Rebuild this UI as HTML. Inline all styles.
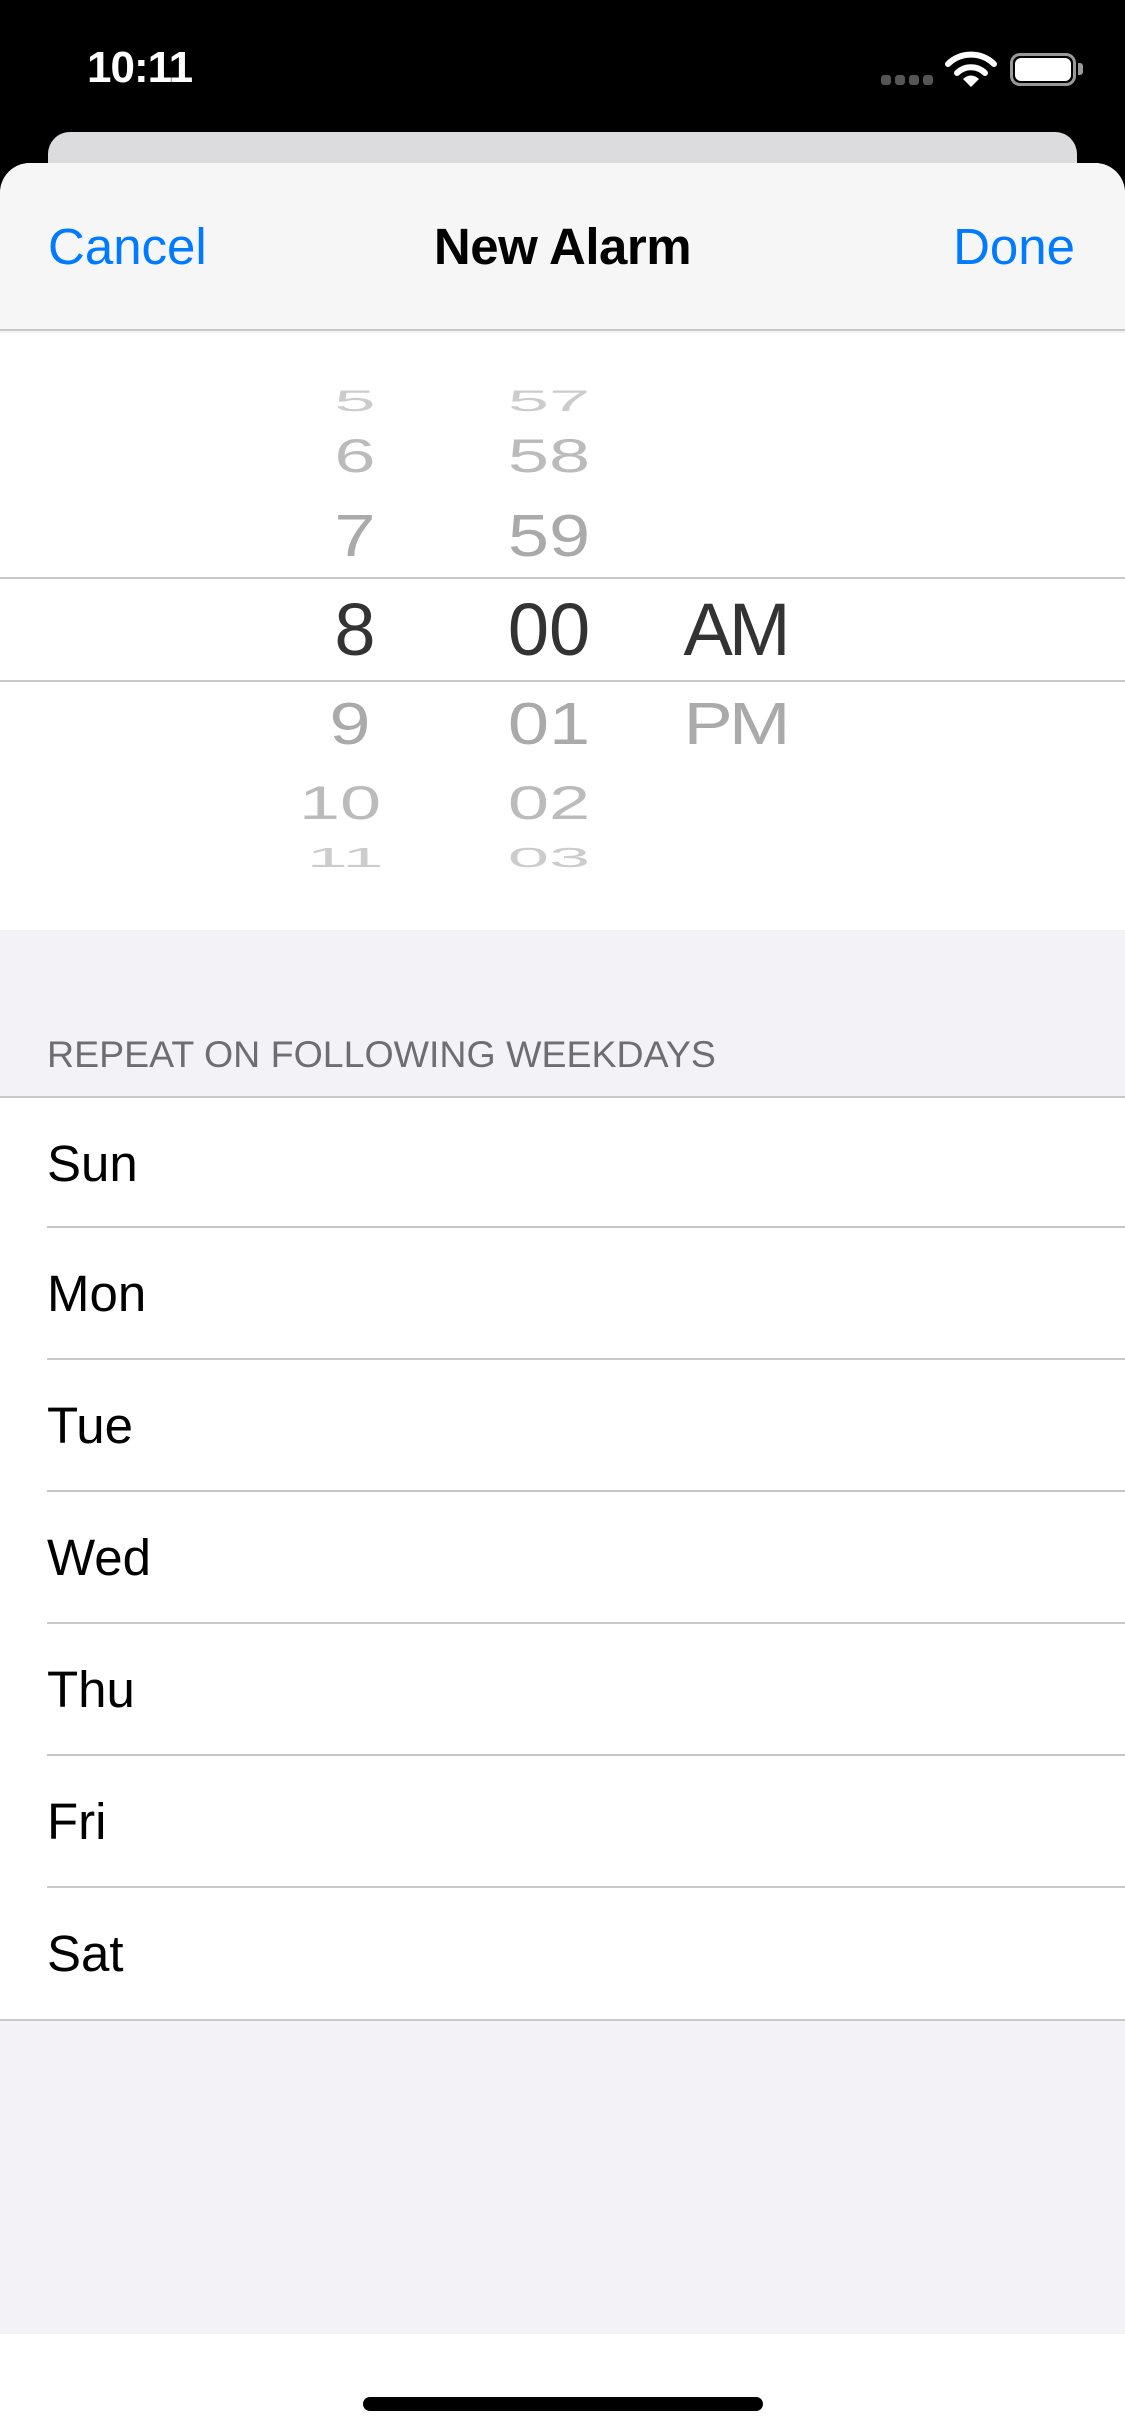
<!DOCTYPE html>
<html><head><meta charset="utf-8"><style>
*{margin:0;padding:0;box-sizing:border-box}
body{width:1125px;height:2436px;position:relative;background:#000;font-family:"Liberation Sans",sans-serif;overflow:hidden}
.a{position:absolute}
.num{position:absolute;width:200px;text-align:center;font-size:74px;line-height:74px;height:74px;}
.row{position:absolute;left:0;width:1125px;height:132px;background:#fff}
.row span{position:absolute;left:47px;top:40px;font-size:51px;line-height:51px;color:#000}
.sep{position:absolute;left:47px;right:0;height:2px;background:#c8c7cc}
</style></head><body>
<div class="a" style="left:87px;top:44px;font-size:44px;font-weight:bold;color:#fff;line-height:48px;letter-spacing:-1px">10:11</div>
<div class="a" style="left:881px;top:75px;width:10px;height:10px;border-radius:3px;background:#555"></div>
<div class="a" style="left:895px;top:75px;width:10px;height:10px;border-radius:3px;background:#555"></div>
<div class="a" style="left:909px;top:75px;width:10px;height:10px;border-radius:3px;background:#555"></div>
<div class="a" style="left:923px;top:75px;width:10px;height:10px;border-radius:3px;background:#555"></div>
<svg class="a" style="left:945px;top:50px" width="52" height="38" viewBox="0 0 52 38">
<path d="M3 14 A33 33 0 0 1 49 14" stroke="#fff" stroke-width="6" fill="none" stroke-linecap="round"/>
<path d="M12 23 A20 20 0 0 1 40 23" stroke="#fff" stroke-width="6" fill="none" stroke-linecap="round"/>
<path d="M26 37 L18 29 A11 11 0 0 1 34 29 Z" fill="#fff"/>
</svg>
<div class="a" style="left:1010px;top:53px;width:66px;height:33px;border:3px solid #999;border-radius:10px"></div>
<div class="a" style="left:1015px;top:58px;width:56px;height:23px;background:#fff;border-radius:6px"></div>
<div class="a" style="left:1078px;top:63px;width:5px;height:12px;background:#999;border-radius:0 3px 3px 0"></div>

<div class="a" style="left:48px;top:132px;width:1029px;height:80px;background:#dcdcde;border-radius:22px 22px 0 0"></div>
<div class="a" style="left:0;top:163px;width:1125px;height:2273px;background:#f2f2f7;border-radius:30px 30px 0 0;overflow:hidden">
  <div class="a" style="left:0;top:0;width:1125px;height:168px;background:#f6f6f7;border-bottom:2px solid #c8c8c8"></div>
  <div class="a" style="left:48px;top:57px;font-size:51px;line-height:54px;color:#007aff">Cancel</div>
  <div class="a" style="left:0;width:1125px;text-align:center;top:57px;font-size:51px;line-height:54px;font-weight:bold;color:#000;letter-spacing:-0.5px">New Alarm</div>
  <div class="a" style="right:50px;top:57px;font-size:51px;line-height:54px;color:#007aff">Done</div>
  <div class="a" style="left:0;top:170px;width:1125px;height:597px;background:#fff"></div>
</div>
<div class="a" style="left:0;top:577px;width:1125px;height:2px;background:#c8c8c8"></div>
<div class="a" style="left:0;top:680px;width:1125px;height:2px;background:#c8c8c8"></div>

<div class="num" style="left:255px;top:364px;color:#ccc;transform:scaleY(0.4)">5</div>
<div class="num" style="left:255px;top:419px;color:#bbb;transform:scaleY(0.64)">6</div>
<div class="num" style="left:255px;top:499px;color:#aaa;transform:scaleY(0.8)">7</div>
<div class="num" style="left:255px;top:593px;color:#333">8</div>
<div class="num" style="left:250px;top:687px;color:#aaa;transform:scaleY(0.8)">9</div>
<div class="num" style="left:240px;top:766px;color:#bbb;transform:scaleY(0.64)">10</div>
<div class="num" style="left:245px;top:821px;color:#ccc;transform:scaleY(0.37)">11</div>

<div class="num" style="left:449px;top:364px;color:#ccc;transform:scaleY(0.4)">57</div>
<div class="num" style="left:449px;top:419px;color:#bbb;transform:scaleY(0.64)">58</div>
<div class="num" style="left:449px;top:499px;color:#aaa;transform:scaleY(0.8)">59</div>
<div class="num" style="left:449px;top:593px;color:#333">00</div>
<div class="num" style="left:449px;top:687px;color:#aaa;transform:scaleY(0.8)">01</div>
<div class="num" style="left:449px;top:766px;color:#bbb;transform:scaleY(0.64)">02</div>
<div class="num" style="left:449px;top:821px;color:#ccc;transform:scaleY(0.37)">03</div>

<div class="num" style="left:635px;top:593px;color:#333;letter-spacing:-4px">AM</div>
<div class="num" style="left:635px;top:687px;color:#aaa;transform:scaleY(0.8);letter-spacing:-4px">PM</div>

<div class="a" style="left:47px;top:1035px;font-size:37.5px;line-height:39px;color:#6d6d72">REPEAT ON FOLLOWING WEEKDAYS</div>
<div class="a" style="left:0;top:1096px;width:1125px;height:2px;background:#c8c7cc"></div>
<div class="row" style="top:1098px"><span>Sun</span></div>
<div class="sep" style="top:1226px"></div>
<div class="row" style="top:1228px"><span>Mon</span></div>
<div class="sep" style="top:1358px"></div>
<div class="row" style="top:1360px"><span>Tue</span></div>
<div class="sep" style="top:1490px"></div>
<div class="row" style="top:1492px"><span>Wed</span></div>
<div class="sep" style="top:1622px"></div>
<div class="row" style="top:1624px"><span>Thu</span></div>
<div class="sep" style="top:1754px"></div>
<div class="row" style="top:1756px"><span>Fri</span></div>
<div class="sep" style="top:1886px"></div>
<div class="row" style="top:1888px;height:132px"><span>Sat</span></div>
<div class="a" style="left:0;top:2019px;width:1125px;height:2px;background:#c8c7cc"></div>
<div class="a" style="left:0;top:2334px;width:1125px;height:102px;background:#fff"></div>
<div class="a" style="left:363px;top:2397px;width:400px;height:14px;border-radius:7px;background:#000"></div>
</body></html>
